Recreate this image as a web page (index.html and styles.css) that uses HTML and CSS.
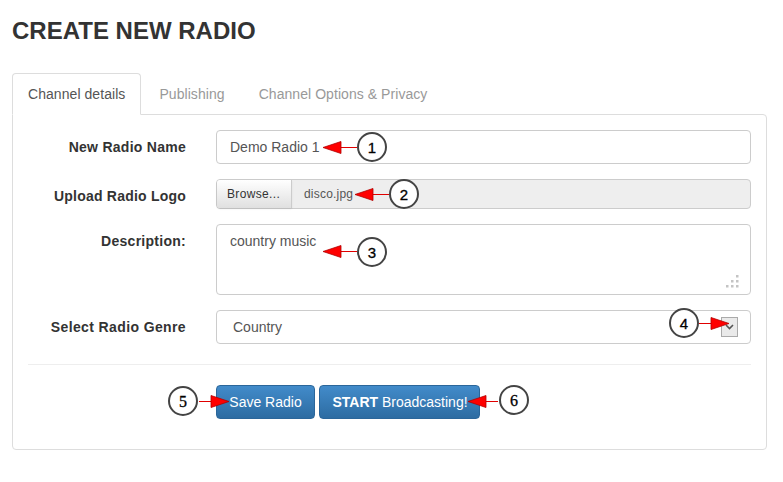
FILE: index.html
```html
<!DOCTYPE html>
<html lang="en">
<head>
<meta charset="utf-8">
<title>Create New Radio</title>
<link rel="stylesheet" href="styles.css">
</head>
<body>
<main class="page">
  <h1 class="title">CREATE NEW RADIO</h1>
  <nav class="tabs">
    <a class="tab active">Channel details</a>
    <a class="tab">Publishing</a>
    <a class="tab">Channel Options &amp; Privacy</a>
  </nav>
  <section class="panel">
    <form class="form">
      <div class="row row-name">
        <label class="label">New Radio Name</label>
        <div class="control input">Demo Radio 1</div>
      </div>
      <div class="row row-file">
        <label class="label">Upload Radio Logo</label>
        <div class="control file">
          <span class="browse">Browse...</span>
          <span class="filename">disco.jpg</span>
        </div>
      </div>
      <div class="row row-desc">
        <label class="label">Description:</label>
        <div class="control textarea">country music
          <svg class="grip" width="14" height="14" viewBox="0 0 14 14"><g fill="#c4c4c4"><rect x="11" y="1" width="2.500" height="2.500"/><rect x="6" y="6" width="2.500" height="2.500"/><rect x="11" y="6" width="2.500" height="2.500"/><rect x="1" y="11" width="2.500" height="2.500"/><rect x="6" y="11" width="2.500" height="2.500"/><rect x="11" y="11" width="2.500" height="2.500"/></g></svg>
        </div>
      </div>
      <div class="row row-genre">
        <label class="label">Select Radio Genre</label>
        <div class="control select">Country
          <span class="select-arrow"><svg width="9" height="6" viewBox="0 0 9 6"><path d="M1 1l3.5 3.500L8 1" fill="none" stroke="#555" stroke-width="1.600"/></svg></span>
        </div>
      </div>
      <hr class="divider">
      <div class="actions">
        <button type="button" class="btn btn-save">Save Radio</button>
        <button type="button" class="btn btn-start"><b>START</b> Broadcasting!</button>
      </div>
    </form>
  </section>
</main>

<svg class="callouts" width="783" height="482" viewBox="0 0 783 482">
  <g class="arrows">
    <path d="M357 147.500H340"/><path class="head" d="M323 147.500L341 141.500V153.500Z"/>
    <path d="M389 194.500H372"/><path class="head" d="M355 194.500L373 188.500V200.500Z"/>
    <path d="M357 251.500H340"/><path class="head" d="M323 251.500L341 245.500V257.500Z"/>
    <path d="M699 323.500H712"/><path class="head" d="M729 323.500L711 317.500V329.500Z"/>
    <path d="M199 401.500H211"/><path class="head" d="M229 401.500L211 395.500V407.500Z"/>
    <path d="M498 401.500H485"/><path class="head" d="M468 401.500L486 395.500V407.500Z"/>
  </g>
  <g class="circles">
    <circle cx="372" cy="147" r="14"/>
    <circle cx="404" cy="194" r="14"/>
    <circle cx="372" cy="252" r="14"/>
    <circle cx="684" cy="323" r="14"/>
    <circle cx="183" cy="401" r="14"/>
    <circle cx="514" cy="400" r="14"/>
  </g>
  <g class="numbers">
    <text x="372" y="153">1</text>
    <text x="404" y="200">2</text>
    <text x="372" y="258">3</text>
    <text x="684" y="329">4</text>
    <text class="serif" x="183" y="407">5</text>
    <text class="serif" x="514" y="406">6</text>
  </g>
</svg>
</body>
</html>
```
FILE: styles.css
```css
* { box-sizing: border-box; }
html, body { margin: 0; padding: 0; background: #fff; }
body {
  width: 783px;
  height: 482px;
  overflow: hidden;
  position: relative;
  font-family: "Liberation Sans", Arial, sans-serif;
  font-size: 14px;
  color: #555;
}
.page { padding: 17px 16px 0 12px; }
.title {
  margin: 0 0 28px;
  font-size: 24px;
  line-height: 28px;
  font-weight: 700;
  color: #333;
}
.tabs { display: flex; gap: 2px; height: 42px; position: relative; z-index: 1; }
.tab {
  padding: 10px 15px 0;
  line-height: 20px;
  letter-spacing: 0.06px;
  color: #999;
  border: 1px solid transparent;
  border-radius: 4px 4px 0 0;
}
.tab.active {
  color: #555;
  background: #fff;
  border-color: #ddd;
  border-bottom-color: #fff;
}
.panel {
  height: 336px;
  margin-top: -1px;
  padding: 15px 15px 0;
  border: 1px solid #ddd;
  border-radius: 0 4px 4px 4px;
}
.row { display: flex; align-items: flex-start; }
.row-name { height: 34px; }
.row-file { height: 30px; margin-top: 15px; }
.row-desc { height: 71px; margin-top: 15px; }
.row-genre { height: 34px; margin-top: 15px; }
.label {
  width: 158px;
  margin-right: 30px;
  text-align: right;
  font-weight: 700;
  line-height: 34px;
  letter-spacing: 0.27px;
  color: #333;
}
.row-file .label { letter-spacing: 0.22px; }
.row-genre .label { letter-spacing: 0.38px; }
.row-desc .label { line-height: 20px; margin-top: 7px; }
.control {
  flex: 1;
  border: 1px solid #ccc;
  border-radius: 4px;
  background: #fff;
  color: #555;
}
.input { height: 34px; padding: 0 13px; line-height: 32px; }
.file {
  height: 30px;
  display: flex;
  background: #eee;
  font-size: 12px;
  line-height: 28px;
}
.browse {
  width: 75px;
  padding-left: 10px;
  letter-spacing: 0.35px;
  color: #333;
  background: linear-gradient(#fff, #e0e0e0);
  border-right: 1px solid #ccc;
  border-radius: 3px 0 0 3px;
  box-shadow: 0 1px 2px rgba(0,0,0,.08);
}
.filename { padding-left: 12px; letter-spacing: 0.2px; }
.textarea { height: 71px; padding: 6px 13px; line-height: 20px; position: relative; }
.grip { position: absolute; right: 11px; bottom: 6px; }
.select { height: 34px; padding: 0 16px; line-height: 32px; position: relative; }
.select-arrow {
  position: absolute;
  right: 12px;
  top: 6px;
  width: 17px;
  height: 20px;
  display: flex;
  align-items: center;
  justify-content: center;
  background: #eaeaea;
  border: 1px solid #aaa;
}
.divider { margin: 20px 0 20px; border: 0; border-top: 1px solid #eee; }
.actions { display: flex; gap: 4px; padding-left: 188px; }
.btn {
  height: 34px;
  padding: 0;
  font: 14px/20px "Liberation Sans", Arial, sans-serif;
  color: #fff;
  white-space: nowrap;
  background: linear-gradient(#428bca, #2d6ca2);
  border: 1px solid #2b669a;
  border-radius: 4px;
}
.btn-save { width: 99px; }
.btn-start { width: 161px; padding-left: 1px; }
.callouts { position: absolute; left: 0; top: 0; pointer-events: none; }
.arrows path { stroke: #e00000; stroke-width: 1; fill: none; }
.arrows .head { fill: #ff0000; stroke: #b00000; stroke-width: 0.800; }
.circles circle { fill: #fff; stroke: #444; stroke-width: 2; }
.numbers text {
  font-family: "Liberation Sans", Arial, sans-serif;
  font-size: 15px;
  fill: #000;
  stroke: #000;
  stroke-width: 0.300;
  text-anchor: middle;
}
.numbers .serif { font-family: "Liberation Serif", "Times New Roman", serif; font-size: 16px; }
```
